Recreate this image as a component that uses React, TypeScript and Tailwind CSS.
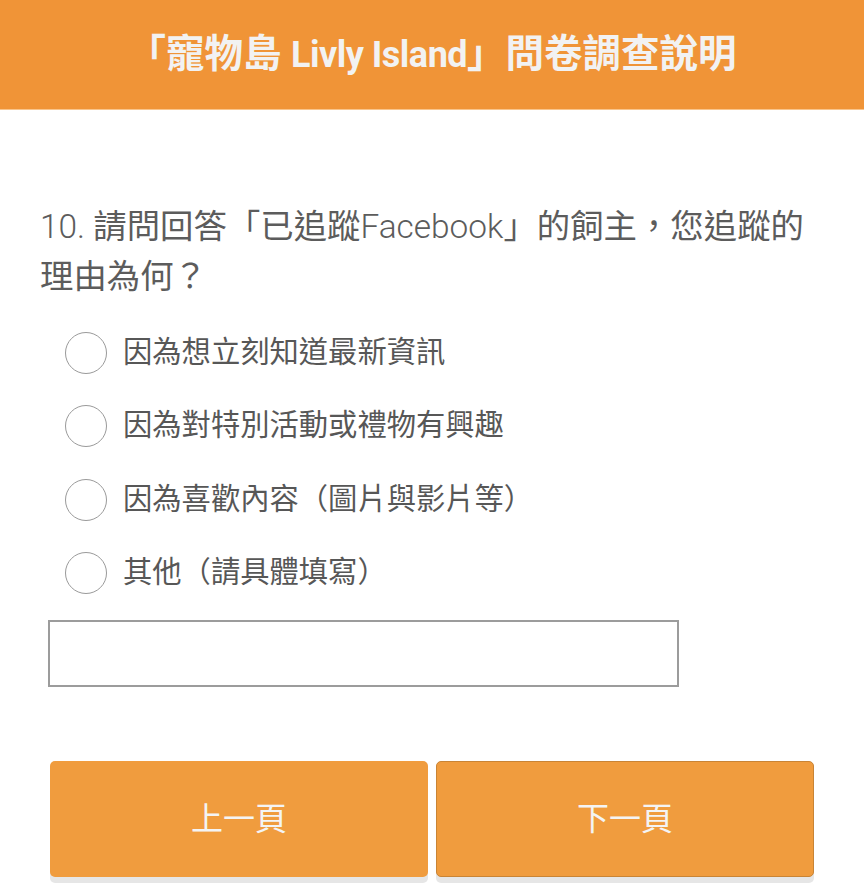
const options = [
  "因為想立刻知道最新資訊",
  "因為對特別活動或禮物有興趣",
  "因為喜歡內容（圖片與影片等）",
  "其他（請具體填寫）",
];

export default function App() {
  return (
    <div className="min-h-screen bg-white font-['Roboto','Noto_Sans_CJK_TC',sans-serif]">
      <header className="flex h-[110px] items-center justify-center border-b border-[#f9c58c] bg-[#f09437] pb-[2px]">
        <h1 className="text-[38.5px] font-bold text-[#f2f2f2]">
          「寵物島 <span className="text-[36px] tracking-[-0.5px]">Livly Island</span>」問卷調查說明
        </h1>
      </header>

      <main className="px-[40px] pt-[92px]">
        <p className="text-[33.4px] leading-[50px] text-[#5c5c5c]">
          <span className="font-light">10.</span> 請問回答「已追蹤<span className="font-light">Facebook</span>」的飼主，您追蹤的理由為何？
        </p>

        <ul className="mt-[14px]">
          {options.map((label) => (
            <li key={label} className="flex h-[73.5px] items-center pl-[25px]">
              <span className="h-[42px] w-[42px] shrink-0 rounded-full border-[1.5px] border-[#9a9a9a] bg-white" />
              <span className="ml-[16px] text-[29.3px] text-[#575757]">{label}</span>
            </li>
          ))}
        </ul>

        <input
          type="text"
          className="mt-[10px] ml-[8px] block h-[67px] w-[631px] border-2 border-[#9c9c9c] bg-white outline-none"
        />

        <div className="mt-[74px] ml-[10px] flex gap-[8px] pb-[20px]">
          <button className="h-[116px] w-[378px] rounded-[5px] bg-[#f09c3e] text-[32px] text-[#f4f4f4] shadow-[0_6px_0_#e6e6e6]">
            上一頁
          </button>
          <button className="h-[116px] w-[378px] rounded-[5px] border border-[#c98435] bg-[#f09c3e] text-[32px] text-[#f4f4f4] shadow-[0_6px_0_#e6e6e6]">
            下一頁
          </button>
        </div>
      </main>
    </div>
  );
}
